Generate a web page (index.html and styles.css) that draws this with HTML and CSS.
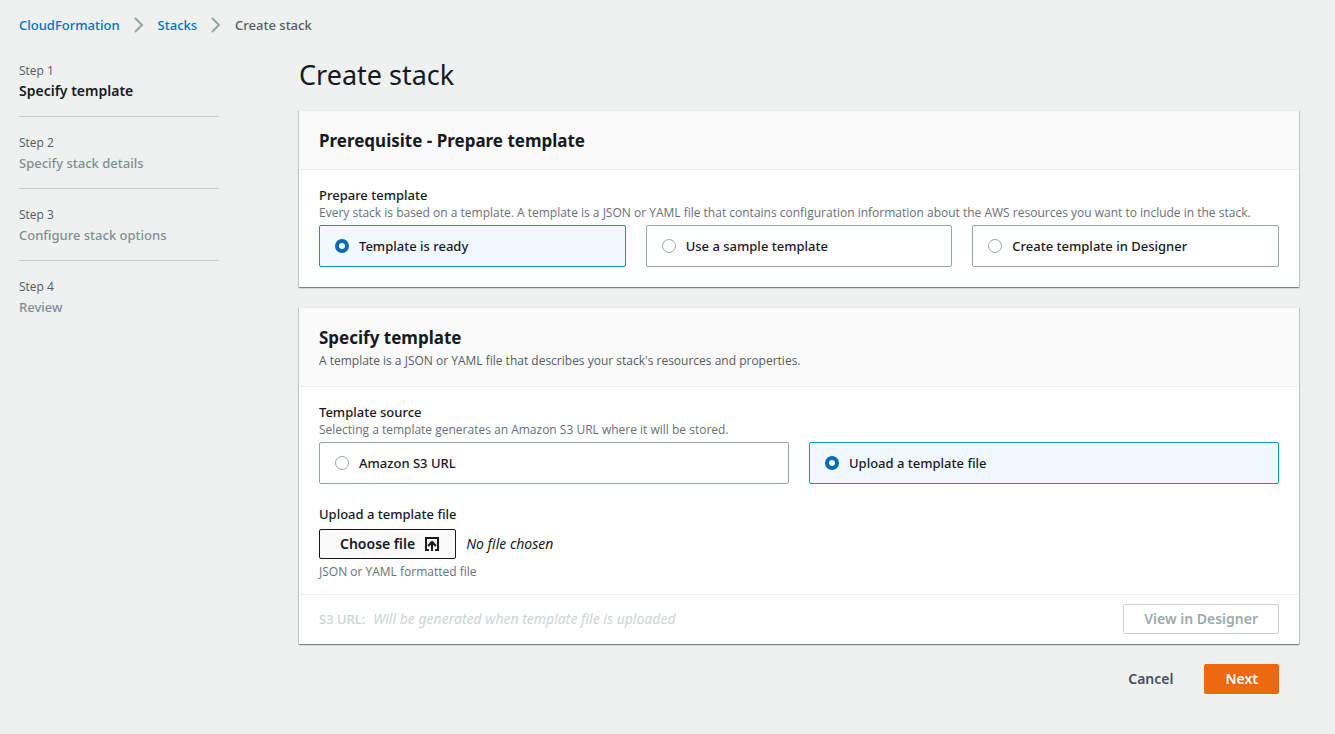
FILE: index.html
```html
<!DOCTYPE html>
<html lang="en">
<head>
<meta charset="utf-8">
<meta name="viewport" content="width=device-width, initial-scale=1">
<title>CloudFormation - Create stack</title>
<link rel="stylesheet" href="styles.css">
</head>
<body>
<nav class="breadcrumbs" aria-label="Breadcrumbs">
  <a href="#cloudformation">CloudFormation</a>
  <svg class="chevron" viewBox="0 0 10 16" aria-hidden="true"><path d="M1 1l7 7-7 7"/></svg>
  <a href="#stacks">Stacks</a>
  <svg class="chevron" viewBox="0 0 10 16" aria-hidden="true"><path d="M1 1l7 7-7 7"/></svg>
  <span>Create stack</span>
</nav>
<div class="layout">
  <ol class="steps">
    <li class="step"><small class="step-number">Step 1</small><span class="step-name current" aria-current="step">Specify template</span></li>
    <li class="step"><small class="step-number">Step 2</small><span class="step-name">Specify stack details</span></li>
    <li class="step"><small class="step-number">Step 3</small><span class="step-name">Configure stack options</span></li>
    <li class="step"><small class="step-number">Step 4</small><span class="step-name">Review</span></li>
  </ol>
  <main class="content">
    <h1>Create stack</h1>
    <form class="wizard">
      <section class="panel">
        <header class="panel-header"><h2>Prerequisite - Prepare template</h2></header>
        <div class="panel-body">
          <div class="field" role="radiogroup" aria-labelledby="prepare-label">
            <div class="label" id="prepare-label">Prepare template</div>
            <p class="hint">Every stack is based on a template. A template is a JSON or YAML file that contains configuration information about the AWS resources you want to include in the stack.</p>
            <div class="options">
              <label class="option"><input type="radio" name="prepare" checked>Template is ready</label>
              <label class="option"><input type="radio" name="prepare">Use a sample template</label>
              <label class="option"><input type="radio" name="prepare">Create template in Designer</label>
            </div>
          </div>
        </div>
      </section>
      <section class="panel">
        <header class="panel-header">
          <h2>Specify template</h2>
          <p class="description">A template is a JSON or YAML file that describes your stack's resources and properties.</p>
        </header>
        <div class="panel-body upload-body">
          <div class="field" role="radiogroup" aria-labelledby="source-label">
            <div class="label" id="source-label">Template source</div>
            <p class="hint">Selecting a template generates an Amazon S3 URL where it will be stored.</p>
            <div class="options">
              <label class="option"><input type="radio" name="source">Amazon S3 URL</label>
              <label class="option"><input type="radio" name="source" checked>Upload a template file</label>
            </div>
          </div>
          <div class="field">
            <div class="label" id="upload-label">Upload a template file</div>
            <div class="file-row">
              <button type="button" class="button file-button" aria-describedby="upload-label">Choose file
                <svg class="upload-icon" viewBox="0 0 16 16" aria-hidden="true"><path d="M5 14H2V2h12v12h-3M8 15V6M4 10l4-4 4 4"/></svg>
              </button>
              <em>No file chosen</em>
            </div>
            <p class="hint">JSON or YAML formatted file</p>
          </div>
        </div>
        <footer class="panel-footer">
          <div class="url"><span>S3 URL:</span><em>Will be generated when template file is uploaded</em></div>
          <button type="button" class="button" disabled>View in Designer</button>
        </footer>
      </section>
      <div class="actions">
        <button type="button" class="button link">Cancel</button>
        <button type="submit" class="button primary">Next</button>
      </div>
    </form>
  </main>
</div>
</body>
</html>
```
FILE: styles.css
```css
* { box-sizing: border-box; }

body {
  margin: 0;
  background: #eff1f0;
  color: #16191f;
  font: 500 13px/20px "Noto Sans", "Open Sans", sans-serif;
}

h1, h2, p { margin: 0; }

.breadcrumbs {
  display: flex;
  align-items: center;
  gap: 14px;
  padding: 15px 19px 0;
  color: #545b64;
}
.breadcrumbs a { color: #0073bb; text-decoration: none; }
.chevron {
  width: 10px;
  height: 16px;
  fill: none;
  stroke: #95a5a6;
  stroke-width: 2;
}

.layout {
  display: flex;
  gap: 80px;
  padding: 20px 36px 40px 19px;
}

.steps {
  flex: 0 0 200px;
  margin: 0;
  padding: 6px 0 0;
  list-style: none;
}
.step {
  display: flex;
  flex-direction: column;
  padding-bottom: 15px;
  margin-bottom: 16px;
  border-bottom: 1px solid #c6d1d1;
}
.step:last-child { border-bottom: 0; }
.step-number { font-size: 12px; font-family: "Open Sans", sans-serif; color: #545b64; }
.step-name { color: #7f8e8f; }
.step-name.current { color: #16191f; font-size: 14px; font-weight: 600; }

.content { flex: 1; min-width: 0; }
h1 { font-size: 27px; font-weight: 400; line-height: 40px; }
.wizard { display: flex; flex-direction: column; gap: 20px; padding-top: 15px; }

.panel {
  background: #fff;
  border-top: 1px solid #eaeded;
  box-shadow: 0 1px 1px 0 rgba(0, 28, 36, .3), 1px 1px 1px 0 rgba(0, 28, 36, .15), -1px 1px 1px 0 rgba(0, 28, 36, .15);
}
.panel-header {
  padding: 16px 20px 14px;
  background: #fafafa;
  border-bottom: 1px solid #eaeded;
}
h2 { font-size: 17px; font-weight: 700; line-height: 28px; }
.description { padding-bottom: 2px; color: #545b64; font: 12px/18px "Open Sans", sans-serif; }

.panel-body {
  display: flex;
  flex-direction: column;
  gap: 20px;
  padding: 15px 20px 20px;
}
.upload-body { padding-bottom: 14px; }
.hint { color: #687078; font: 12px/16px "Open Sans", sans-serif; }
.options { display: flex; gap: 20px; padding-top: 4px; }
.option {
  flex: 1;
  display: flex;
  align-items: center;
  gap: 10px;
  padding: 10px 15px;
  border: 1px solid #95a5a6;
  border-radius: 2px;
}
.option:has(:checked) { background: #f1f8ff; border-color: #0099bf; }
.option input {
  appearance: none;
  width: 14px;
  height: 14px;
  margin: 0;
  background: #fff;
  border: 1px solid #95a5a6;
  border-radius: 50%;
}
.option input:checked { border: 4px solid #006bb8; }

em { font-size: 14px; font-weight: 400; }
.file-row { display: flex; align-items: center; gap: 10px; padding: 5px 0; }
.button {
  height: 30px;
  padding: 0 20px;
  border: 1px solid #545b64;
  border-radius: 2px;
  background: #fff;
  color: #545b64;
  font: 600 14px/20px "Noto Sans", sans-serif;
}
.button:disabled { border-color: #c9d3d3; color: #9babab; }
.file-button {
  display: flex;
  align-items: center;
  gap: 9px;
  padding: 0 15px 0 20px;
  background: #fafafa;
  border-color: #16191f;
  color: #16191f;
}
.upload-icon { width: 16px; height: 16px; fill: none; stroke: #16191f; stroke-width: 2; }

.panel-footer {
  display: flex;
  align-items: center;
  justify-content: space-between;
  padding: 9px 20px 10px;
  border-top: 1px solid #eaeded;
}
.url { display: flex; gap: 8px; color: #ccd5d5; }

.actions { display: flex; justify-content: flex-end; gap: 10px; padding-right: 20px; }
.link { border-color: transparent; background: none; color: #484f5a; }
.primary { border-color: #ec6912; background: #ec6912; color: #fff; }
```
